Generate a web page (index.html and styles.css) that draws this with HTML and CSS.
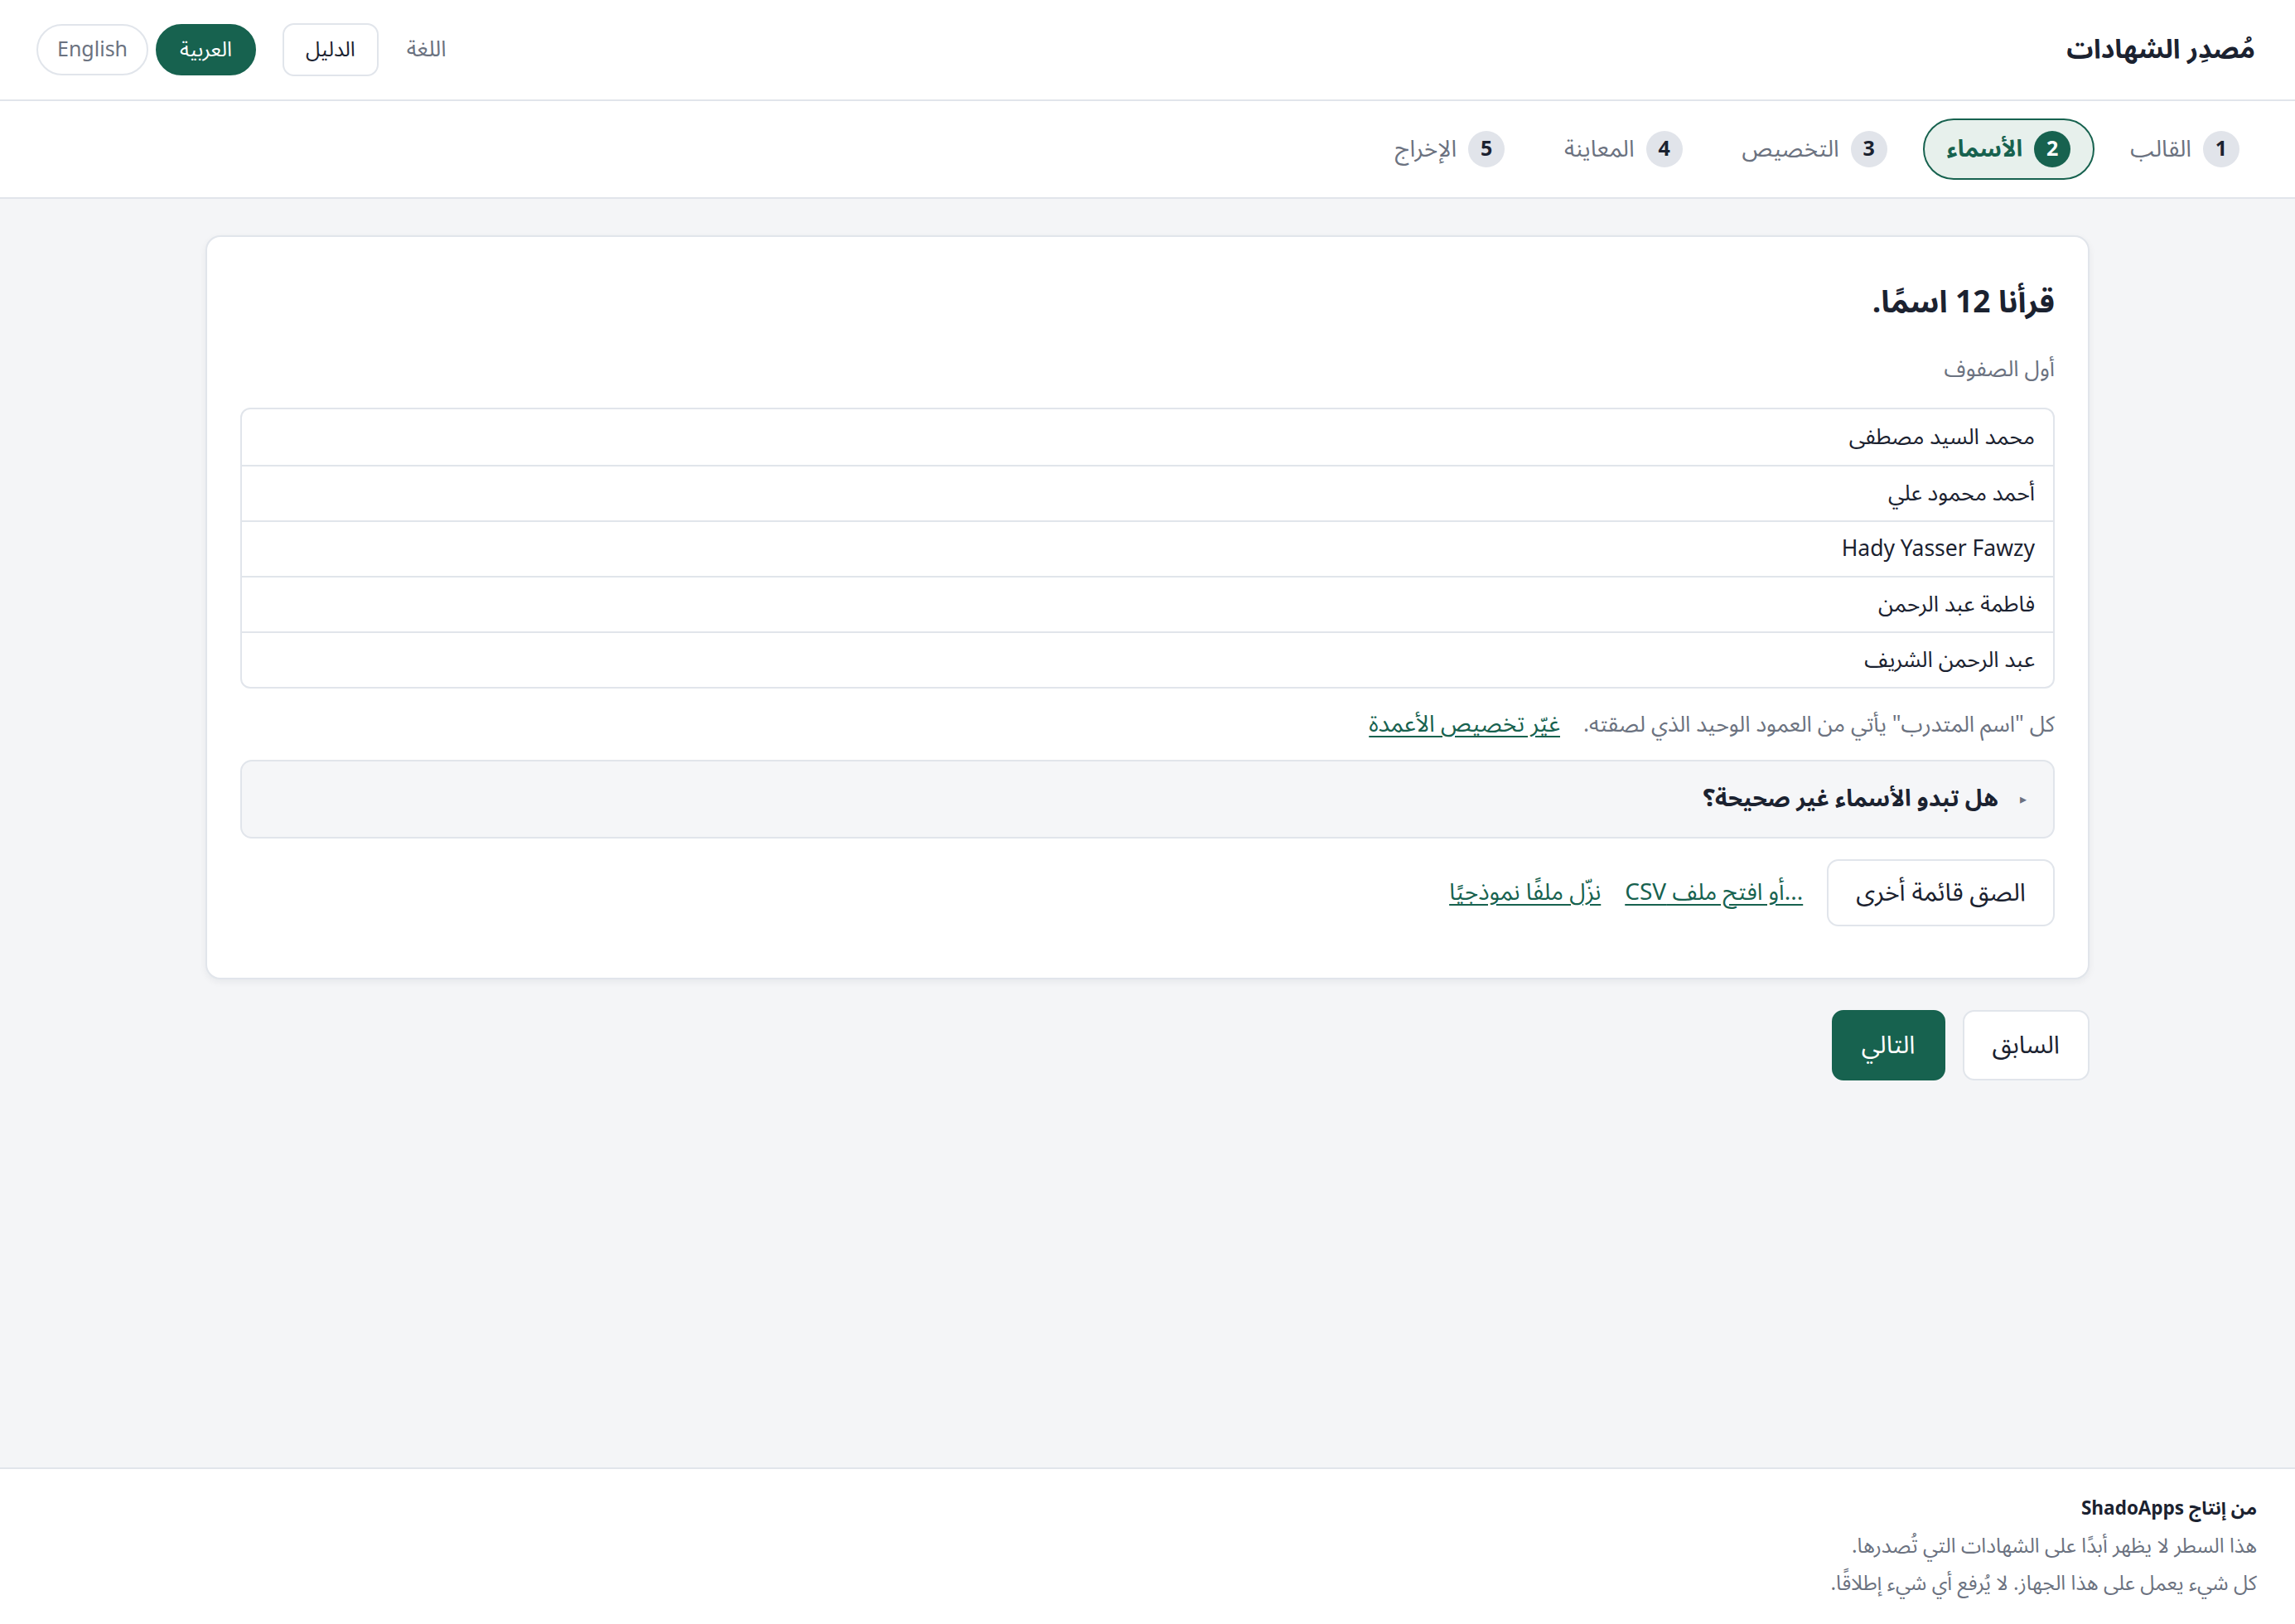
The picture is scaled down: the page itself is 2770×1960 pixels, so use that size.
FILE: index.html
```html
<!DOCTYPE html>
<html lang="ar" dir="rtl">
<head>
  <meta charset="UTF-8" />
  <meta name="viewport" content="width=device-width, initial-scale=1.0"/>
  <title>مُصدِر الشهادات</title>
  <link rel="stylesheet" href="styles.css">
</head>
<body>
  <header class="topbar">
    <div class="brand">مُصدِر الشهادات</div>
    <div class="topbar-tools">
      <span class="lang-label">اللغة</span>
      <button class="btn-guide">الدليل</button>
      <div class="lang-switch">
        <button class="lang-pill is-active">العربية</button>
        <button class="lang-pill" lang="en">English</button>
      </div>
    </div>
  </header>

  <nav class="steps">
    <ol class="steps-list">
      <li class="step"><span class="step-num">1</span><span class="step-label">القالب</span></li>
      <li class="step is-current"><span class="step-num">2</span><span class="step-label">الأسماء</span></li>
      <li class="step"><span class="step-num">3</span><span class="step-label">التخصيص</span></li>
      <li class="step"><span class="step-num">4</span><span class="step-label">المعاينة</span></li>
      <li class="step"><span class="step-num">5</span><span class="step-label">الإخراج</span></li>
    </ol>
  </nav>

  <main class="page">
    <section class="card">
      <h1 class="card-title">قرأنا 12 اسمًا.</h1>
      <p class="muted-label">أول الصفوف</p>

      <ul class="name-list">
        <li>محمد السيد مصطفى</li>
        <li>أحمد محمود علي</li>
        <li>Hady Yasser Fawzy</li>
        <li>فاطمة عبد الرحمن</li>
        <li>عبد الرحمن الشريف</li>
      </ul>

      <p class="note">
        <span>كل "اسم المتدرب" يأتي من العمود الوحيد الذي لصقته.</span>
        <a href="#" class="link">غيّر تخصيص الأعمدة</a>
      </p>

      <details class="help">
        <summary><span class="help-marker">&#9656;</span>هل تبدو الأسماء غير صحيحة؟</summary>
        <p>تأكد من أن كل اسم في سطر مستقل.</p>
      </details>

      <div class="actions">
        <button class="btn">الصق قائمة أخرى</button>
        <a href="#" class="link">...أو افتح ملف CSV</a>
        <a href="#" class="link">نزّل ملفًا نموذجيًا</a>
      </div>
    </section>

    <div class="wizard-nav">
      <button class="btn btn-nav">السابق</button>
      <button class="btn btn-nav btn-primary">التالي</button>
    </div>
  </main>

  <footer class="footer">
    <p class="footer-credit">من إنتاج ShadoApps</p>
    <p>هذا السطر لا يظهر أبدًا على الشهادات التي تُصدرها.</p>
    <p>كل شيء يعمل على هذا الجهاز. لا يُرفع أي شيء إطلاقًا.</p>
  </footer>
</body>
</html>
```

FILE: styles.css
```css
:root {
  --green: #17624f;
  --green-soft: #e7f0ec;
  --text: #1b2230;
  --muted: #6b7280;
  --line: #e1e5eb;
  --bg: #f4f5f7;
}

* {
  margin: 0;
  padding: 0;
  box-sizing: border-box;
}

body {
  font-family: "Noto Sans Arabic", "Noto Sans", "DejaVu Sans", sans-serif;
  color: var(--text);
  background: var(--bg);
  min-height: 100vh;
  display: flex;
  flex-direction: column;
}

button {
  font-family: inherit;
  cursor: pointer;
}

/* top bar */
.topbar {
  height: 122px;
  background: white;
  border-bottom: 2px solid var(--line);
  display: flex;
  align-items: center;
  justify-content: space-between;
  padding: 0 48px 0 44px;
}

.brand {
  font-size: 32px;
  font-weight: 700;
}

.topbar-tools {
  display: flex;
  align-items: center;
}

.lang-label {
  font-size: 26.5px;
  color: var(--muted);
  margin-left: 34px;
}

.btn-guide {
  height: 64px;
  padding: 0 26px;
  font-size: 25px;
  color: var(--text);
  background: white;
  border: 2px solid var(--line);
  border-radius: 14px;
  margin-left: 32px;
}

.lang-switch {
  display: flex;
  gap: 9px;
}

.lang-pill {
  height: 62px;
  padding: 0 23px;
  font-size: 25px;
  color: var(--muted);
  background: white;
  border: 2px solid var(--line);
  border-radius: 999px;
}

.lang-pill.is-active {
  padding: 0 27px;
  background: var(--green);
  border-color: var(--green);
  color: white;
}

/* steps */
.steps {
  height: 118px;
  background: white;
  border-bottom: 2px solid var(--line);
  display: flex;
  align-items: center;
  padding: 0 38px;
}

.steps-list {
  list-style: none;
  display: flex;
  gap: 14px;
}

.step {
  display: flex;
  align-items: center;
  gap: 14px;
  height: 74px;
  padding: 0 27px;
  border: 2px solid transparent;
  border-radius: 999px;
}

.step-num {
  width: 44px;
  height: 44px;
  border-radius: 50%;
  background: #e1e4ea;
  display: flex;
  align-items: center;
  justify-content: center;
  font-size: 25px;
  font-weight: 700;
  color: var(--text);
}

.step-label {
  font-size: 28px;
  color: var(--muted);
}

.step.is-current {
  background: var(--green-soft);
  border-color: var(--green);
}

.step.is-current .step-num {
  background: var(--green);
  color: white;
}

.step.is-current .step-label {
  color: var(--green);
  font-weight: 700;
}

/* main */
.page {
  flex: 1;
  width: 2274px;
  margin: 0 auto;
  padding: 44px 0 60px;
}

.card {
  background: white;
  border: 2px solid var(--line);
  border-radius: 18px;
  box-shadow: 0 3px 8px rgba(20, 30, 50, 0.06);
  padding: 53px 40px 62px;
  display: flex;
  flex-direction: column;
}

.card-title {
  font-size: 37px;
  font-weight: 700;
  line-height: 52px;
}

.muted-label {
  font-size: 26.5px;
  line-height: 36px;
  color: var(--muted);
  margin-top: 37px;
}

.name-list {
  list-style: none;
  margin-top: 28px;
  border: 2px solid var(--line);
  border-radius: 12px;
}

.name-list li {
  height: 67px;
  display: flex;
  align-items: center;
  padding: 0 22px;
  font-size: 26.5px;
}

.name-list li + li {
  border-top: 2px solid var(--line);
}

.note {
  display: flex;
  gap: 28px;
  align-items: center;
  margin-top: 26px;
  font-size: 26.5px;
  line-height: 36px;
  color: var(--muted);
}

.note .link {
  font-size: 28px;
}

.link {
  color: var(--green);
  text-decoration: underline;
  text-underline-offset: 5px;
}

.help {
  margin-top: 24px;
  background: #f5f6f8;
  border: 2px solid var(--line);
  border-radius: 14px;
}

.help summary {
  list-style: none;
  height: 91px;
  display: flex;
  align-items: center;
  gap: 26px;
  padding: 0 32px;
  font-size: 28px;
  font-weight: 700;
  cursor: pointer;
}

.help summary::-webkit-details-marker {
  display: none;
}

.help-marker {
  font-size: 16px;
  color: var(--muted);
}

.actions {
  display: flex;
  align-items: center;
  gap: 29px;
  margin-top: 25px;
}

.actions .link {
  font-size: 28px;
}

.btn {
  height: 81px;
  padding: 0 33px;
  font-size: 30px;
  color: var(--text);
  background: white;
  border: 2px solid var(--line);
  border-radius: 14px;
}

.wizard-nav {
  display: flex;
  gap: 21px;
  margin-top: 37px;
}

.btn-nav {
  height: 85px;
  padding: 0 34px;
}

.btn-primary {
  background: var(--green);
  border-color: var(--green);
  color: white;
}

/* footer */
.footer {
  background: white;
  border-top: 2px solid var(--line);
  padding: 26px 46px 26px;
  font-size: 24.6px;
  line-height: 45px;
  color: var(--muted);
}

.footer-credit {
  color: var(--text);
  font-size: 22.5px;
  font-weight: 700;
}
```
